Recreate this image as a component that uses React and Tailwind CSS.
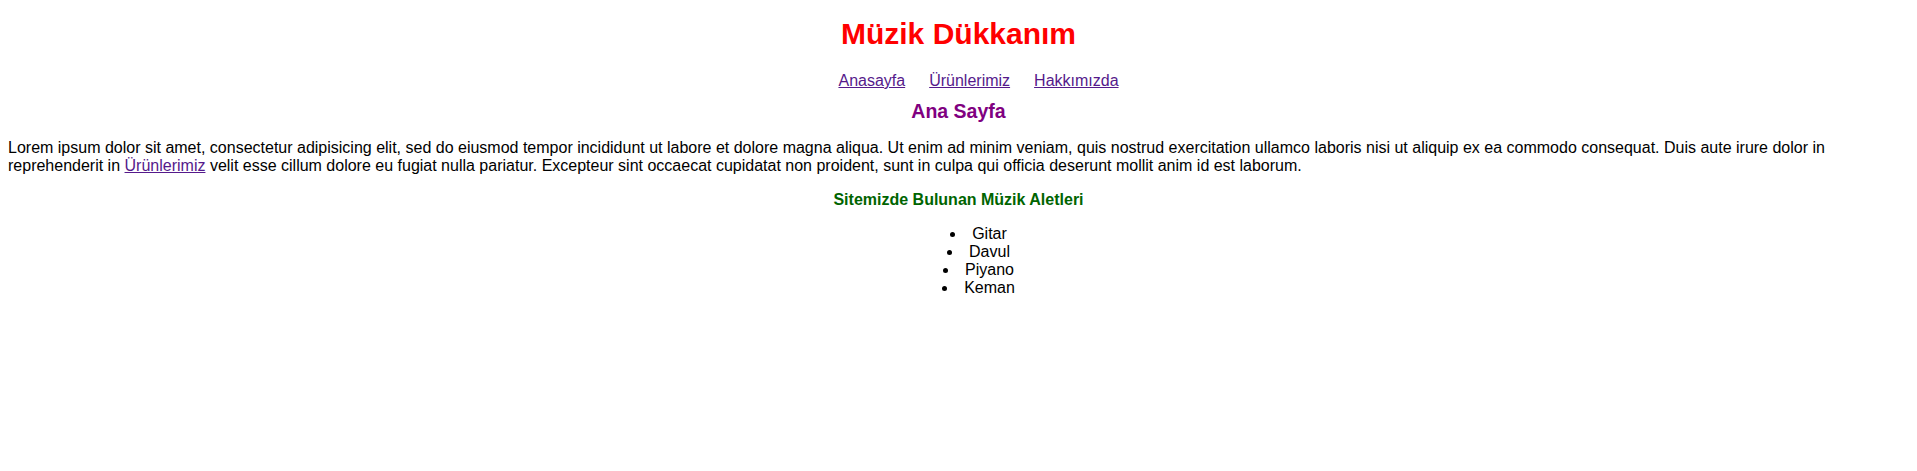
import React from 'react';

const navLinks = ['Anasayfa', 'Ürünlerimiz', 'Hakkımızda'];
const aletler = ['Gitar', 'Davul', 'Piyano', 'Keman'];

const App = () => {
  return (
    <div className="px-2 pt-[17px] font-['Liberation_Sans',Arial,sans-serif] text-[16px] text-black leading-[normal] bg-white min-h-screen">
      {/* Başlık */}
      <h1 className="text-center text-[30px] leading-[normal] font-bold text-[#ff0000]">Müzik Dükkanım</h1>

      {/* Menü */}
      <ul className="mt-[21px] pl-10 flex justify-center gap-6">
        {navLinks.map((link) => (
          <li key={link}>
            <a href="#" className="underline text-[#551a8b]">
              {link}
            </a>
          </li>
        ))}
      </ul>

      <h2 className="mt-[10px] text-center text-[19.5px] leading-[normal] font-bold text-[#800080]">Ana Sayfa</h2>

      <p className="mt-[16px]">
        Lorem ipsum dolor sit amet, consectetur adipisicing elit, sed do eiusmod tempor incididunt ut labore et dolore magna
        aliqua. Ut enim ad minim veniam, quis nostrud exercitation ullamco laboris nisi ut aliquip ex ea commodo consequat.
        Duis aute irure dolor in reprehenderit in{' '}
        <a href="#" className="underline text-[#551a8b]">
          Ürünlerimiz
        </a>{' '}
        velit esse cillum dolore eu fugiat nulla pariatur. Excepteur sint occaecat cupidatat non proident, sunt in culpa qui
        officia deserunt mollit anim id est laborum.
      </p>

      <h4 className="mt-[16px] text-center font-bold text-[#006400]">Sitemizde Bulunan Müzik Aletleri</h4>

      {/* Müzik aletleri listesi */}
      <ul className="mt-4 pl-10 list-disc list-inside text-center">
        {aletler.map((alet) => (
          <li key={alet}>{alet}</li>
        ))}
      </ul>
    </div>
  );
};

export default App;
